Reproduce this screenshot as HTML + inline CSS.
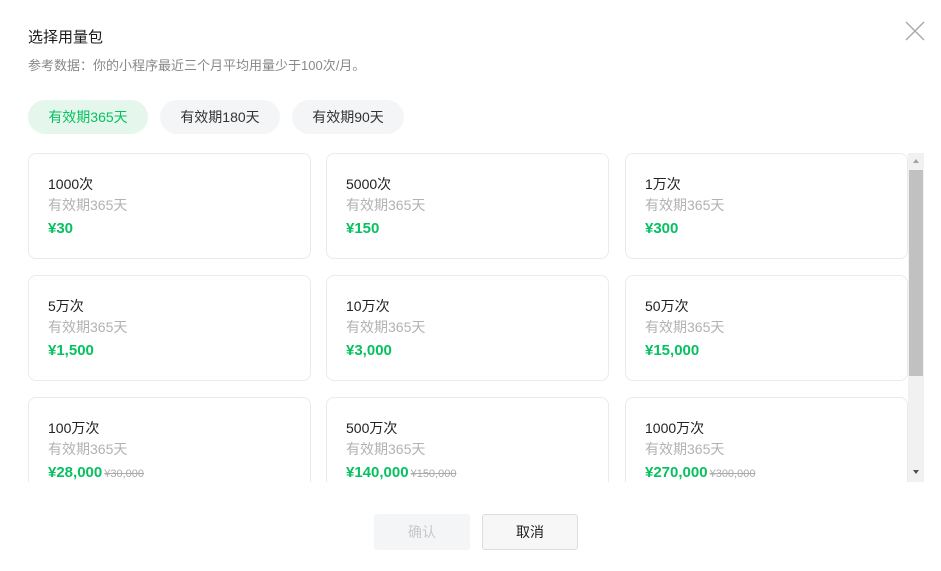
<!DOCTYPE html>
<html><head><meta charset="utf-8"><style>
*{margin:0;padding:0;box-sizing:border-box}
body{width:941px;height:571px;background:#fff;font-family:"Liberation Sans","Noto Sans CJK SC",sans-serif;position:relative;overflow:hidden;color:#1a1a1a}
.abs{position:absolute}
.title{left:28px;top:28px;font-size:15px;line-height:20px}
.sub{left:28px;top:57px;font-size:13px;color:#888;line-height:18px}
.tab{top:100px;height:34px;border-radius:17px;background:#f4f5f7;font-size:14px;line-height:34px;text-align:center;color:#333}
.tab.on{background:#e5f7ec;color:#07c160}
.scroll{left:28px;top:153px;width:896px;height:329px;overflow:hidden}
.card{position:absolute;width:283px;height:106px;border:1px solid #ebebeb;border-radius:8px;padding:20px 0 0 19px}
.n{font-size:14px;line-height:20px;color:#222}
.v{font-size:14px;line-height:23px;color:#b2b2b2}
.p{font-size:15px;line-height:22px;color:#07c160;font-weight:bold;margin-top:1px}
.p s{font-size:11px;color:#aaa;font-weight:normal;margin-left:2px}
.sb{left:908px;top:153px;width:16px;height:329px;background:#f1f1f1}
.thumb{left:909px;top:170px;width:14px;height:206px;background:#c1c1c1}
.btn{top:514px;width:96px;height:36px;border-radius:3px;font-size:14px;line-height:36px;text-align:center}
</style></head><body>
<div class="abs title">选择用量包</div>
<div class="abs sub">参考数据：你的小程序最近三个月平均用量少于100次/月。</div>
<svg class="abs" style="left:904px;top:20px" width="22" height="22"><path d="M2 2L20 20M20 2L2 20" stroke="#aaa" stroke-width="1.5"/></svg>
<div class="abs tab on" style="left:28px;width:120px">有效期365天</div>
<div class="abs tab" style="left:160px;width:120px">有效期180天</div>
<div class="abs tab" style="left:292px;width:112px">有效期90天</div>
<div class="abs scroll">
<div class="card" style="left:0;top:0"><div class="n">1000次</div><div class="v">有效期365天</div><div class="p">¥30</div></div>
<div class="card" style="left:298px;top:0"><div class="n">5000次</div><div class="v">有效期365天</div><div class="p">¥150</div></div>
<div class="card" style="left:597px;top:0"><div class="n">1万次</div><div class="v">有效期365天</div><div class="p">¥300</div></div>
<div class="card" style="left:0;top:122px"><div class="n">5万次</div><div class="v">有效期365天</div><div class="p">¥1,500</div></div>
<div class="card" style="left:298px;top:122px"><div class="n">10万次</div><div class="v">有效期365天</div><div class="p">¥3,000</div></div>
<div class="card" style="left:597px;top:122px"><div class="n">50万次</div><div class="v">有效期365天</div><div class="p">¥15,000</div></div>
<div class="card" style="left:0;top:244px"><div class="n">100万次</div><div class="v">有效期365天</div><div class="p">¥28,000<s>¥30,000</s></div></div>
<div class="card" style="left:298px;top:244px"><div class="n">500万次</div><div class="v">有效期365天</div><div class="p">¥140,000<s>¥150,000</s></div></div>
<div class="card" style="left:597px;top:244px"><div class="n">1000万次</div><div class="v">有效期365天</div><div class="p">¥270,000<s>¥300,000</s></div></div>
</div>
<div class="abs sb"></div>
<div class="abs thumb"></div>
<svg class="abs" style="left:908px;top:156px" width="16" height="10"><path d="M5 7L11 7L8 3Z" fill="#a3a3a3"/></svg>
<svg class="abs" style="left:908px;top:467px" width="16" height="10"><path d="M5 3L11 3L8 7Z" fill="#505050"/></svg>
<div class="abs btn" style="left:374px;background:#f4f5f7;color:#c8c8c8">确认</div>
<div class="abs btn" style="left:482px;background:#f7f7f7;border:1px solid #dcdcdc;color:#222;line-height:34px">取消</div>
</body></html>
